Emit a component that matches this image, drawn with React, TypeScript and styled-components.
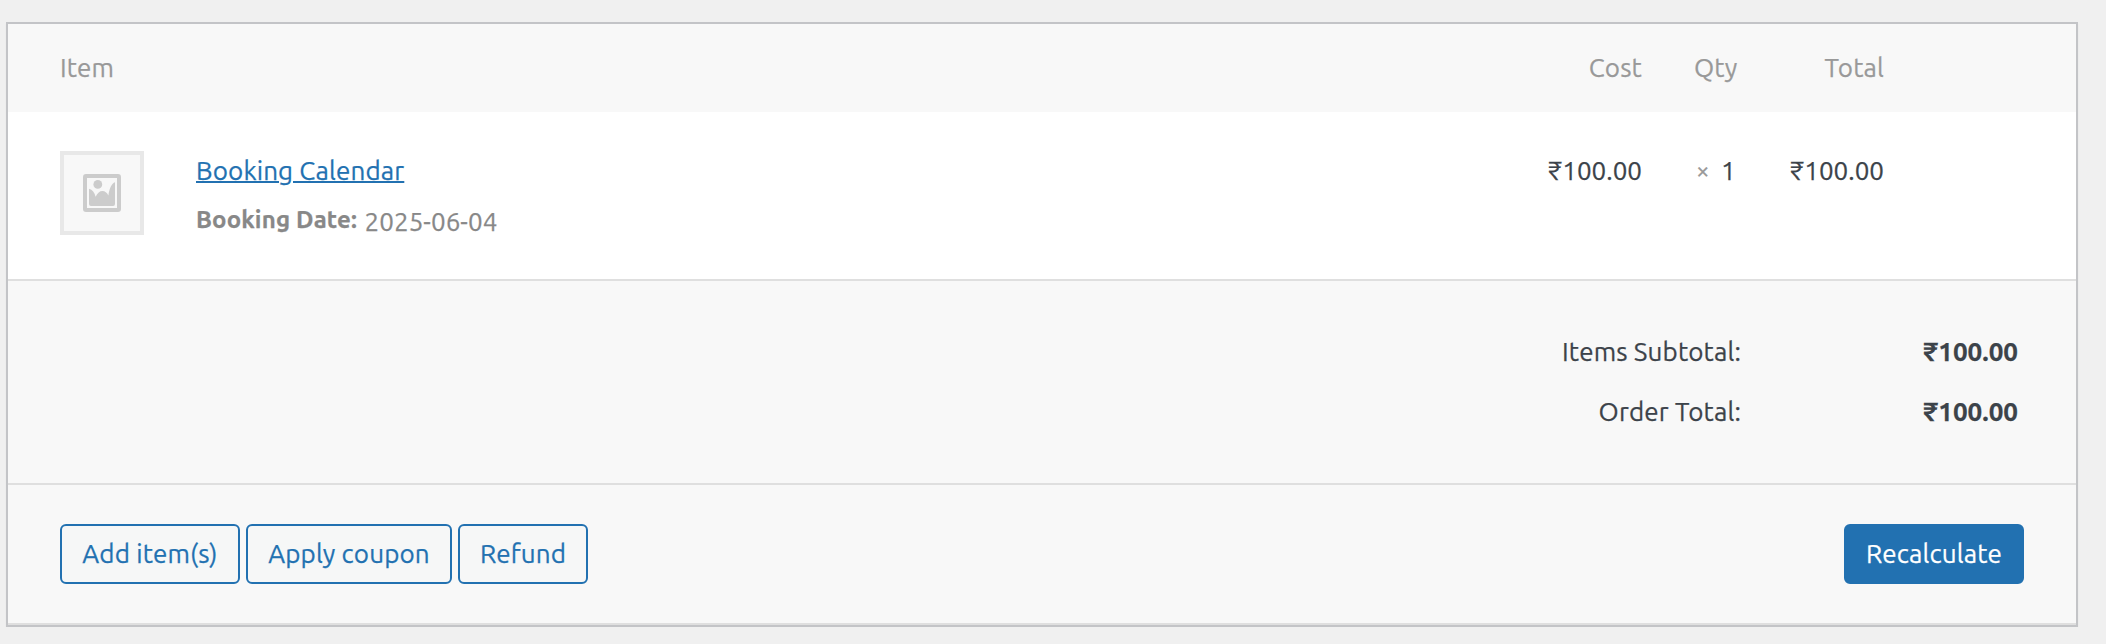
import React from 'react';
import styled, { createGlobalStyle } from 'styled-components';

const GlobalStyle = createGlobalStyle`
  * { box-sizing: border-box; }
  body {
    margin: 0;
    background: #f0f0f0;
    color: #3c434a;
    font: 26px/36px Ubuntu, "Noto Sans", sans-serif;
    letter-spacing: 0.15px;
    -webkit-text-stroke: 0.25px currentColor;
  }
`;

const Panel = styled.section`
  width: 2072px;
  margin: 22px 0 0 6px;
  background: #f8f8f8;
  border: 2px solid #c3c4c7;
  box-shadow: 0 2px 2px rgba(0, 0, 0, 0.04);
`;

const itemColumns = `
  display: grid;
  grid-template-columns: 84px 1fr 171px 94px 96px;
  padding-left: 52px;
  padding-right: 192px;
`;

const HeaderRow = styled.header`
  ${itemColumns}
  height: 88px;
  padding-top: 26px;
  color: #999;
`;

const ItemRow = styled.div`
  ${itemColumns}
  height: 169px;
  padding-top: 39px;
  background: #fff;
  border-bottom: 2px solid #dfdfdf;
`;

const Cell = styled.div`
  white-space: nowrap;
`;

const CostCell = styled(Cell)`
  padding-right: 52px;
  text-align: right;
`;

const TotalCell = styled(Cell)`
  text-align: right;
`;

const QtyCell = styled(Cell)`
  display: flex;
`;

const ItemBody = styled.div`
  display: contents;
  & > ${Cell} { padding-top: 2px; letter-spacing: 0; }
`;

const Times = styled.small`
  width: 27px;
  padding-left: 2px;
  flex: none;
  color: #999;
  font-size: 24px;
`;

const Thumbnail = styled.div`
  display: flex;
  align-items: center;
  justify-content: center;
  width: 84px;
  height: 84px;
  background: #f8f8f8;
  border: 4px solid #e8e8e8;
`;

const Product = styled.div`
  padding: 2px 0 0 52px;
`;

const ProductLink = styled.a`
  display: block;
  width: max-content;
  color: #2271b1;
  text-decoration: underline;
  text-decoration-thickness: 2px;
`;

const Meta = styled.dl`
  display: flex;
  margin: 0;
  padding-top: 13px;
  color: #888;
`;

const MetaLabel = styled.dt`
  width: 168.5px;
  font-size: 24px;
  font-weight: 700;
  white-space: nowrap;
`;

const MetaValue = styled.dd`
  margin: 2px 0 0;
  letter-spacing: 0.05px;
`;

const Totals = styled.div`
  display: grid;
  grid-template-columns: 1fr 277px;
  align-content: start;
  row-gap: 24px;
  height: 204px;
  padding: 53px 58px 0 0;
  text-align: right;
  border-bottom: 2px solid #dfdfdf;
`;

const Amount = styled.strong`
  letter-spacing: 0;
`;

const Actions = styled.footer`
  display: flex;
  gap: 6px;
  height: 140px;
  padding: 39px 52px 0;
  border-bottom: 2px solid #dfdfdf;
`;

const Button = styled.button<{ $width: number; $primary?: boolean }>`
  width: ${p => p.$width}px;
  height: 60px;
  padding: 0;
  margin-left: ${p => (p.$primary ? 'auto' : '0')};
  border: 2px solid #2271b1;
  border-radius: 6px;
  background: ${p => (p.$primary ? '#2271b1' : '#f6f7f7')};
  color: ${p => (p.$primary ? '#fff' : '#2271b1')};
  font: inherit;
  letter-spacing: inherit;
  white-space: nowrap;
`;

const ImageIcon = () => (
  <svg width="38" height="38" viewBox="0 0 38 38" fill="#ccc">
    <path
      fillRule="evenodd"
      d="M3 0H35Q38 0 38 3V35Q38 38 35 38H3Q0 38 0 35V3Q0 0 3 0ZM4 4V34H34V4Z"
    />
    <circle cx="14.8" cy="10.4" r="4.4" />
    <path d="M6 14.7C9.5 15.5 11.5 18.5 12.6 22.7C14.5 18.8 16.7 17 19.4 17C22 17 24 18.6 25.4 21.4C26.4 14.2 28.8 9.3 32 8.3V30Q32 32 30 32H8Q6 32 6 30Z" />
  </svg>
);

export default function App() {
  return (
    <>
      <GlobalStyle />
      <Panel>
        <HeaderRow>
          <Cell>Item</Cell>
          <Cell />
          <CostCell>Cost</CostCell>
          <QtyCell>Qty</QtyCell>
          <TotalCell>Total</TotalCell>
        </HeaderRow>
        <ItemRow>
          <ItemBody>
            <Thumbnail><ImageIcon /></Thumbnail>
            <Product>
              <ProductLink>Booking Calendar</ProductLink>
              <Meta>
                <MetaLabel>Booking Date:</MetaLabel>
                <MetaValue>2025-06-04</MetaValue>
              </Meta>
            </Product>
            <CostCell>₹100.00</CostCell>
            <QtyCell><Times>×</Times><span>1</span></QtyCell>
            <TotalCell>₹100.00</TotalCell>
          </ItemBody>
        </ItemRow>
        <Totals>
          <span>Items Subtotal:</span>
          <Amount>₹100.00</Amount>
          <span>Order Total:</span>
          <Amount>₹100.00</Amount>
        </Totals>
        <Actions>
          <Button $width={180}>Add item(s)</Button>
          <Button $width={206}>Apply coupon</Button>
          <Button $width={130}>Refund</Button>
          <Button $primary $width={180}>Recalculate</Button>
        </Actions>
      </Panel>
    </>
  );
}
